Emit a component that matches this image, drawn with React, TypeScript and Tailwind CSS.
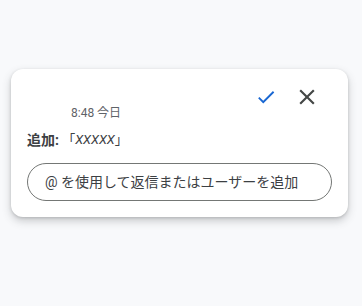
const font = { fontFamily: 'Roboto, "Noto Sans CJK JP", sans-serif' };

function CheckIcon() {
  return (
    <svg width="22" height="22" viewBox="0 0 24 24" fill="#1967d2">
      <path d="M9 16.17L4.83 12l-1.42 1.41L9 19 21 7l-1.41-1.41z" />
    </svg>
  );
}

function CloseIcon() {
  return (
    <svg width="26" height="26" viewBox="0 0 24 24" fill="#444746">
      <path d="M19 6.41L17.59 5 12 10.59 6.41 5 5 6.41 10.59 12 5 17.59 6.41 19 12 13.41 17.59 19 19 17.59 13.41 12z" />
    </svg>
  );
}

export default function App() {
  return (
    <div className="w-[362px] h-[306px] bg-[#f8f9fb] pt-[69px] pl-[11px]" style={font}>
      <div className="w-[337px] bg-white rounded-xl shadow-[0_4px_8px_rgba(60,64,67,0.25),0_1px_3px_rgba(60,64,67,0.2)] px-4 pt-3 pb-4">
        <div className="flex justify-between">
          <div className="pl-[44px] pt-[24px] text-xs leading-4 text-[#5f6368]">8:48 今日</div>
          <div className="flex gap-[9px] mr-[9px]">
            <button className="w-8 h-8 flex items-center justify-center">
              <CheckIcon />
            </button>
            <button className="w-8 h-8 flex items-center justify-center">
              <CloseIcon />
            </button>
          </div>
        </div>
        <div className="mt-[9px] h-5 flex items-center text-[13px] leading-5 text-[#3c4043] whitespace-pre">
          <span className="font-bold text-[14px]">追加:</span> 「<i>XXXXX</i>」
        </div>
        <div className="mt-[13px] h-[38px] rounded-full border border-[#747775] flex items-center px-[17px] text-sm text-[#3c4043]">
          @ を使用して返信またはユーザーを追加
        </div>
      </div>
    </div>
  );
}
